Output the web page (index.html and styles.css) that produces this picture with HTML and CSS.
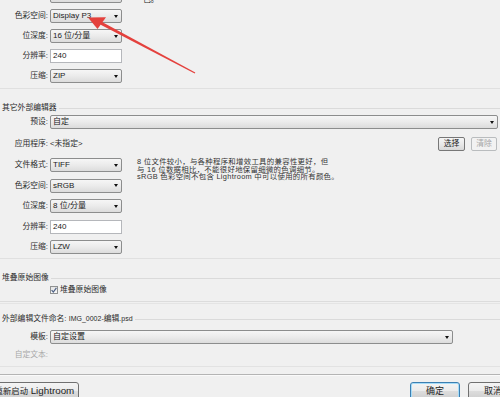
FILE: index.html
```html
<!DOCTYPE html>
<html lang="zh-CN">
<head>
<meta charset="utf-8">
<title>外部编辑</title>
<link rel="stylesheet" href="styles.css">
</head>
<body>
<div class="page">
  <div class="sec-top">
    <div class="row"><span class="lbl"></span><div class="sel"><span class="val"></span></div><span class="tail">色。</span></div>
    <div class="row"><span class="lbl">色彩空间:</span><div class="sel"><span class="val">Display P3</span><i class="arr"></i></div></div>
    <div class="row"><span class="lbl">位深度:</span><div class="sel"><span class="val">16 位/分量</span><i class="arr"></i></div></div>
    <div class="row"><span class="lbl">分辨率:</span><div class="inp"><span class="val">240</span></div></div>
    <div class="row"><span class="lbl">压缩:</span><div class="sel"><span class="val">ZIP</span><i class="arr"></i></div></div>
  </div>
  <div class="hr hr-a"></div>

  <div class="grp grp-a"><span>其它外部编辑器</span></div>
  <div class="row"><span class="lbl">预设:</span><div class="sel sel-wide"><span class="val">自定</span><i class="arr"></i></div></div>
  <div class="row row-app">
    <span class="lbl">应用程序:</span><span class="val">&lt;未指定&gt;</span>
    <div class="btns"><button class="btn">选择</button><button class="btn btn-dis">清除</button></div>
  </div>

  <div class="fmt">
    <div class="fmt-col">
      <div class="row row-f"><span class="lbl">文件格式:</span><div class="sel"><span class="val">TIFF</span><i class="arr"></i></div></div>
      <div class="row row-f"><span class="lbl">色彩空间:</span><div class="sel"><span class="val">sRGB</span><i class="arr"></i></div></div>
      <div class="row row-f"><span class="lbl">位深度:</span><div class="sel"><span class="val">8 位/分量</span><i class="arr"></i></div></div>
      <div class="row row-f"><span class="lbl">分辨率:</span><div class="inp"><span class="val">240</span></div></div>
      <div class="row row-f"><span class="lbl">压缩:</span><div class="sel"><span class="val">LZW</span><i class="arr"></i></div></div>
    </div>
    <p class="desc">8 位文件较小，与各种程序和增效工具的兼容性更好，但<br>与 16 位数据相比，不能很好地保留细微的色调细节。<br>sRGB 色彩空间不包含 Lightroom 中可以使用的所有颜色。</p>
  </div>
  <div class="hr hr-b"></div>

  <div class="grp grp-b"><span>堆叠原始图像</span></div>
  <div class="chk-row">
    <span class="box"><svg width="6" height="6" viewBox="0 0 6 6"><polyline points="0.6,3.2 2.3,5 5.4,0.8" fill="none" stroke="#4d6185" stroke-width="1.2"/></svg></span>
    <span>堆叠原始图像</span>
  </div>
  <div class="hr2"></div>

  <div class="grp grp-c"><span>外部编辑文件命名: <span class="small">IMG_0002-</span>编辑<span class="small">.psd</span></span></div>
  <div class="row row-tpl"><span class="lbl">模板:</span><div class="sel sel-tpl"><span class="val">自定设置</span><i class="arr"></i></div></div>
  <div class="row row-txt"><span class="lbl lbl-dis">自定文本:</span></div>
  <div class="line-a"></div>
  <div class="line-b"></div>

  <div class="foot">
    <button class="fbtn fbtn-restart"><span class="cjk">重新启动</span> Lightroom</button>
    <button class="fbtn fbtn-ok">确定</button>
    <button class="fbtn fbtn-cancel">取消</button>
  </div>

  <svg class="arrow" width="500" height="397" viewBox="0 0 500 397">
    <polygon points="88,17.6 106,17.2 97.5,29" fill="#e4413d"/>
    <polygon points="101.2,21.6 100.2,24.4 194.7,73.6 195.3,72.4" fill="#e4413d"/>
  </svg>
</div>
</body>
</html>
```

FILE: styles.css
```css
* { box-sizing: border-box; }
html, body {
  margin: 0;
  padding: 0;
  background: #f0f0f0;
}
body {
  font-family: "Liberation Sans", "Noto Sans CJK SC", sans-serif;
  font-size: 7.8px;
  color: #2b2b2b;
}
.page {
  position: relative;
  width: 500px;
  height: 397px;
  overflow: hidden;
}
.sec-top { margin-top: -14px; }

.row {
  display: flex;
  align-items: center;
  height: 20px;
  line-height: 10px;
}
.row-f { height: 20.5px; }
.lbl {
  flex: none;
  width: 48px;
  margin-right: 2px;
  text-align: right;
  white-space: nowrap;
}
.lbl-dis { color: #a8a8a8; }

.sel, .inp {
  flex: none;
  display: flex;
  align-items: center;
  width: 72px;
  height: 14px;
  padding-left: 2px;
  font-size: 8px;
  color: #222;
  white-space: nowrap;
}
.sel {
  border: 1px solid #8c8d8d;
  border-radius: 2px;
  background: linear-gradient(#f6f6f6 0%, #ebebeb 50%, #dcdcdc 100%);
}
.inp {
  border: 1px solid #b5b7bb;
  background: #fff;
}
.arr {
  margin-left: auto;
  margin-right: 3px;
  width: 0;
  height: 0;
  border-left: 2.5px solid transparent;
  border-right: 2.5px solid transparent;
  border-top: 3px solid #111;
}
.sel-wide { width: 448px; }
.sel-tpl { width: 403px; }
.tail {
  margin-left: 21px;
  margin-top: 8px;
}

.hr { height: 1px; background: #e0e0e0; }
.hr-a { margin-top: 2px; }
.hr-b { margin-top: 0.5px; }

.grp {
  display: flex;
  align-items: center;
  height: 8px;
  line-height: 8px;
  padding-left: 2px;
  white-space: nowrap;
}
.grp::after {
  content: "";
  flex: 1;
  height: 1px;
  margin-left: 2px;
  background: #dadada;
}
.grp-a { margin-top: 15px; }
.grp-b { margin-top: 15px; }
.grp-c { margin-top: 11px; }
.small { font-size: 7px; }

.row-app { margin-top: 2px; }
.btns {
  margin-left: auto;
  margin-right: 3px;
  display: flex;
  gap: 6px;
}
.btn {
  width: 27px;
  height: 14px;
  padding: 0;
  font-family: inherit;
  font-size: 7.8px;
  line-height: 12px;
  color: #222;
  border: 1px solid #777;
  border-radius: 2px;
  background: linear-gradient(#f5f5f5 0%, #e9e9e9 50%, #d8d8d8 100%);
}
.btn-dis {
  width: 26px;
  color: #a5a5a5;
  border-color: #b9bcbe;
  background: #f2f2f2;
}

.fmt {
  display: grid;
  grid-template-columns: 122px auto;
  margin-top: 1px;
}
.desc {
  margin: 0;
  padding: 3px 0 0 15px;
  font-size: 7.4px;
  letter-spacing: 0.3px;
  line-height: 7.6px;
  white-space: nowrap;
  color: #333;
}

.chk-row {
  display: flex;
  align-items: center;
  gap: 2px;
  height: 12px;
  margin-top: 2px;
  padding-left: 50px;
  line-height: 10px;
}
.box {
  display: flex;
  align-items: center;
  justify-content: center;
  width: 8px;
  height: 8px;
  border: 1px solid #8f9191;
  background: linear-gradient(#e4e4e4, #f8f8f8);
}

.hr2 {
  height: 3px;
  margin-top: 5px;
  border-top: 1px solid #dcdcdc;
  border-bottom: 1px solid #e4e4e4;
}

.row-tpl { margin-top: 4px; }
.row-txt { height: 16px; }

.line-a { height: 1px; margin-top: 3px; background: #e2e2e2; }
.line-b { height: 1px; margin-top: 7px; background: #b4b4b4; box-shadow: 0 1px 0 #fafafa; }

.foot {
  display: flex;
  margin-top: 7px;
}
.fbtn {
  flex: none;
  height: 18px;
  padding: 0;
  font-family: inherit;
  font-size: 9px;
  line-height: 15px;
  color: #222;
  border: 1px solid #707070;
  border-radius: 3px;
  background: linear-gradient(#f4f4f4 0%, #ebebeb 50%, #dddddd 51%, #cfcfcf 100%);
  white-space: nowrap;
}
.fbtn-restart { width: 89px; margin-left: -10px; font-size: 9.8px; }
.fbtn-restart .cjk { font-size: 8.3px; }
.fbtn-ok {
  width: 50px;
  margin-left: 331px;
  border-color: #3c7fb1;
  box-shadow: inset 0 0 0 1px #a6dcf8;
}
.fbtn-cancel { width: 50px; margin-left: 8px; }

.arrow {
  position: absolute;
  left: 0;
  top: 0;
  pointer-events: none;
}
```
